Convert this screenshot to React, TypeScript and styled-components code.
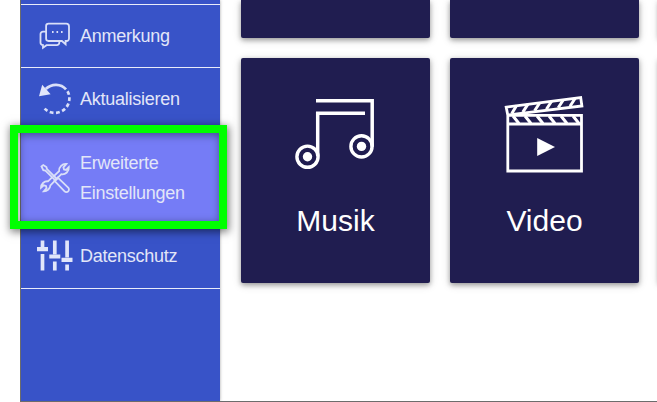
import React from "react";
import styled, { createGlobalStyle } from "styled-components";

const GlobalStyle = createGlobalStyle`
  * { box-sizing: border-box; }
  body { margin: 0; overflow: hidden; background: #fff; font-family: "Liberation Sans", Arial, sans-serif; }
`;

const Screen = styled.div`
  position: relative;
  width: 657px;
  height: 402px;
  padding-left: 20px;
  overflow: hidden;
  background: #fff;
`;

const AppWindow = styled.div`
  display: flex;
  height: 402px;
  border-left: 1px solid #6c6c6c;
  border-bottom: 1px solid #6c6c6c;
  overflow: hidden;
`;

const Sidebar = styled.nav`
  flex: 0 0 199px;
  padding-top: 4px;
  background: #3853c8;
  box-shadow: 0 0 3px rgba(0, 0, 0, 0.35);
`;

const NavItem = styled.a<{ $tall?: boolean; $active?: boolean }>`
  display: flex;
  align-items: center;
  height: ${(p) => (p.$tall ? 94 : 63)}px;
  padding-left: 14px;
  border-top: 1px solid #e9ecfa;
  background: ${(p) => (p.$active ? "#757cf6" : "transparent")};
  color: #e2e6f8;
  font-size: 18px;
  line-height: 30px;
  letter-spacing: -0.26px;
`;

const NavIcon = styled.svg`
  flex: 0 0 40px;
  width: 40px;
  height: 40px;
  margin-right: 5px;
  fill: none;
  stroke: #d9dff8;
  stroke-width: 1.8;
`;

const NavEnd = styled.div`
  height: 1px;
  margin-top: 1px;
  background: #e9ecfa;
`;

const Content = styled.main`
  flex: 1;
  display: grid;
  grid-template-columns: repeat(3, 189px);
  grid-template-rows: 38px 225px;
  gap: 20px;
  padding-left: 21px;
`;

const Card = styled.section<{ $cut?: boolean }>`
  display: flex;
  flex-direction: column;
  align-items: center;
  padding-top: 35px;
  overflow: hidden;
  border-radius: ${(p) => (p.$cut ? "0 0 2px 2px" : "2px")};
  background: #201d50;
  box-shadow: 0 2px 5px rgba(0, 0, 0, 0.32), 0 2px 10px rgba(0, 0, 0, 0.16);
`;

const CardIcon = styled.svg`
  width: 85px;
  height: 84px;
  fill: none;
  stroke: #fff;
`;

const CardTitle = styled.h2`
  margin: 26px 0 0;
  color: #fff;
  font-size: 30px;
  font-weight: 400;
  line-height: 36px;
`;

const Highlight = styled.div`
  position: absolute;
  left: 10px;
  top: 125px;
  width: 217px;
  height: 104px;
  border: 8px solid #00ff00;
  box-shadow: 1px 2px 8px 1px rgba(0, 0, 0, 0.5), inset 1px 2px 8px rgba(0, 0, 0, 0.42);
  pointer-events: none;
`;

const CommentIcon = () => (
  <NavIcon viewBox="35 16 40 40">
    <path d="M48.5 23.7h17.8a2.7 2.7 0 0 1 2.7 2.7v12.2a2.4 2.4 0 0 1-2.4 2.4h-1v3.2l-3.7-3.2H48.5a2.4 2.4 0 0 1-2.4-2.4V26.1a2.4 2.4 0 0 1 2.4-2.4z" />
    <path d="M46 31.6h-3a2.5 2.5 0 0 0-2.5 2.5v8.6a2.5 2.5 0 0 0 2.5 2.5v2.6l3.5-2.6h10.3a2.5 2.5 0 0 0 2.5-2.5V41" />
    <path d="M52 32h1.6M56.5 32h1.6M61 32h1.6" />
  </NavIcon>
);

const RefreshIcon = () => (
  <NavIcon viewBox="35 79 40 40">
    <path d="M45.7 89C51.8 83.2 61 83.6 66 89.4" strokeWidth="2.7" />
    <path d="M67 90.4A14.5 14.5 0 0 1 44.6 108.6" strokeWidth="2.7" strokeDasharray="3.8 2.5" strokeDashoffset="-1" />
    <path d="M42.2 84.8 39 96.2l11.6-2z" fill="#e1e6fa" stroke="none" />
  </NavIcon>
);

const ToolsIcon = () => (
  <NavIcon viewBox="35 158.5 40 40">
    <path d="m41.5 167 1.8-1.5 3.1 2.1.6 2 10 10-1.5 1.5-10.1-10-2.1-.5z" />
    <path d="m57.8 178.1 10.4 10.1a2.5 2.5 0 0 1 0 3.6 2.5 2.5 0 0 1-3.6 0L54.5 181.3z" />
    <path d="m53.3 177.2 5.8-5.6a6.6 6.6 0 0 1 7.3-7.1l-3 3.3.6 2.1 2.1.5 2.7-2.8a6.5 6.5 0 0 1-7.5 7.1l-3.4 3.5m-3.4 3.5-4.1 4.1a6.6 6.6 0 0 1-6.6 6.1l2.8-3.2-.6-2.3-2.3-.6-2.7 2.5a6.4 6.4 0 0 1 7-6.5l4.6-4.5" />
  </NavIcon>
);

const SlidersIcon = () => (
  <NavIcon viewBox="35 236.5 40 40">
    <g stroke="#e1e6fa">
      <path d="M42.5 241v6.5M42.5 254.5V271M54.8 241v14M54.8 262v9M67.1 241v17M67.1 265v6" strokeWidth="3.7" />
      <path d="M37 249.7h11M49.3 257h11M61.5 260.4H72.5" strokeWidth="4.2" />
    </g>
  </NavIcon>
);

const MusicIcon = () => (
  <CardIcon viewBox="293 93 85 84">
    <path d="M316 100.8h56.2v46M365 113.3h-47.3v43" strokeWidth="3.5" />
    <circle cx="307.5" cy="156.7" r="10.6" strokeWidth="3.4" />
    <circle cx="361.5" cy="146.4" r="10.6" strokeWidth="3.4" />
    <circle cx="307.5" cy="156.7" r="4.7" fill="#fff" stroke="none" />
    <circle cx="361.5" cy="146.4" r="4.7" fill="#fff" stroke="none" />
  </CardIcon>
);

const VideoIcon = () => (
  <CardIcon viewBox="502 93 85 84">
    <path d="M507.8 171V115.3H581.5V171zM507.8 124h73.7M507.8 115.3l-1.6-8.2 74.5-9.6 1.2 8.5-73 8.8" strokeWidth="2.8" />
    <path d="m513 116 6 7.5M525 116l6 7.5M537 116l6 7.5M549 116l6 7.5M561 116l6 7.5M573 116l6 7.5M511.8 113.5l4.8-8M522.8 112.1l5.2-8M534.6 110.7l5.2-8M546.4 109.2l5.2-8M558.2 107.8l5.2-8M570 106.3l5.2-8" strokeWidth="3" />
    <path d="M537.2 138v18l17.8-9z" fill="#fff" stroke="none" />
  </CardIcon>
);

export default function App() {
  return (
    <>
      <GlobalStyle />
      <Screen>
        <AppWindow>
          <Sidebar>
            <NavItem><CommentIcon />Anmerkung</NavItem>
            <NavItem><RefreshIcon />Aktualisieren</NavItem>
            <NavItem $tall $active><ToolsIcon /><span>Erweiterte<br />Einstellungen</span></NavItem>
            <NavItem><SlidersIcon />Datenschutz</NavItem>
            <NavEnd />
          </Sidebar>
          <Content>
            <Card $cut />
            <Card $cut />
            <Card $cut />
            <Card><MusicIcon /><CardTitle>Musik</CardTitle></Card>
            <Card><VideoIcon /><CardTitle>Video</CardTitle></Card>
            <Card />
          </Content>
        </AppWindow>
        <Highlight />
      </Screen>
    </>
  );
}
